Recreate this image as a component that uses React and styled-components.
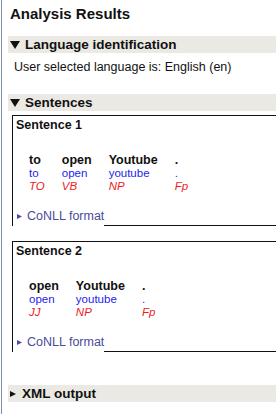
import React from 'react';
import styled, { createGlobalStyle } from 'styled-components';

const GlobalStyle = createGlobalStyle`
    html, body {
        margin: 0;
        padding: 0;
        background: #fff;
    }
    body {
        font-family: "Liberation Sans", Arial, sans-serif;
        color: #111;
    }
`;

const barGrey = '#ebe9e3';
const linkBlue = '#4b4b9b';

const Page = styled.div`
    width: 276px;
    height: 414px;
    overflow: hidden;
    background: #fff;
`;

const Panel = styled.div`
    width: 420px;
    min-height: 414px;
    margin-left: 1px;
    border-left: 1px solid #8090a8;
    padding-left: 6px;
    padding-top: 5px;
    box-sizing: border-box;
`;

const Title = styled.h2`
    margin: 0;
    padding-left: 2px;
    font-size: 15px;
    line-height: 18px;
    font-weight: bold;
`;

const SectionBar = styled.div`
    display: flex;
    align-items: center;
    height: 17px;
    margin-top: ${({ $gap }) => $gap}px;
    padding-left: 2px;
    background: ${barGrey};
    font-size: 13.5px;
    line-height: 17px;
    font-weight: bold;
`;

const LangText = styled.div`
    margin-top: 6px;
    padding-left: 6px;
    font-size: 12.5px;
    line-height: 16px;
`;

const SentenceBox = styled.div`
    margin: ${({ $gap }) => $gap}px 0 0 4px;
    border-top: 1px solid #111;
    border-left: 1px solid #111;
`;

const SentenceTitle = styled.div`
    padding: 2px 0 0 3px;
    font-size: 12.5px;
    line-height: 15px;
    font-weight: bold;
`;

const TokenRow = styled.div`
    display: flex;
    gap: 17px;
    margin: 20px 0 0 16px;
`;

const Token = styled.div`
    display: flex;
    flex-direction: column;
`;

const Word = styled.span`
    font-size: 12.5px;
    line-height: 14px;
    font-weight: bold;
    color: #111;
`;

const Lemma = styled.span`
    font-size: 11.5px;
    line-height: 13px;
    color: #1c1cf0;
`;

const Tag = styled.span`
    font-size: 11.5px;
    line-height: 12px;
    font-style: italic;
    color: #f01c1c;
`;

const BoxFooter = styled.div`
    display: flex;
    margin-top: 17px;
`;

const FormatLink = styled.a`
    display: flex;
    align-items: center;
    padding: 0 0 2px 4px;
    font-size: 12.5px;
    line-height: 15px;
    color: ${linkBlue};
    text-decoration: none;
    cursor: pointer;
`;

const Filler = styled.div`
    flex: 1;
    border-bottom: 1px solid #111;
`;

const Marker = styled.svg`
    flex: none;
    margin-right: ${({ $space }) => $space}px;
`;

const DownArrow = () => (
    <Marker $space={5} width="10" height="8" viewBox="0 0 10 8">
        <polygon points="0,0 10,0 5,8" fill="#111" />
    </Marker>
);

const RightArrow = ({ color = '#111', size = 6, space = 6 }) => (
    <Marker $space={space} width={size} height={size} viewBox="0 0 6 6">
        <polygon points="0,0 6,3 0,6" fill={color} />
    </Marker>
);

const sentences = [
    {
        title: 'Sentence 1',
        tokens: [
            { word: 'to', lemma: 'to', tag: 'TO' },
            { word: 'open', lemma: 'open', tag: 'VB' },
            { word: 'Youtube', lemma: 'youtube', tag: 'NP' },
            { word: '.', lemma: '.', tag: 'Fp' },
        ],
    },
    {
        title: 'Sentence 2',
        tokens: [
            { word: 'open', lemma: 'open', tag: 'JJ' },
            { word: 'Youtube', lemma: 'youtube', tag: 'NP' },
            { word: '.', lemma: '.', tag: 'Fp' },
        ],
    },
];

const Sentence = ({ sentence, gap }) => (
    <SentenceBox $gap={gap}>
        <SentenceTitle>{sentence.title}</SentenceTitle>
        <TokenRow>
            {sentence.tokens.map((t, i) => (
                <Token key={i}>
                    <Word>{t.word}</Word>
                    <Lemma>{t.lemma}</Lemma>
                    <Tag>{t.tag}</Tag>
                </Token>
            ))}
        </TokenRow>
        <BoxFooter>
            <FormatLink>
                <RightArrow color={linkBlue} size={5} space={5} />
                CoNLL format
            </FormatLink>
            <Filler />
        </BoxFooter>
    </SentenceBox>
);

export default function App() {
    return <>
        <GlobalStyle />
        <Page>
            <Panel>
                <Title>Analysis Results</Title>
                <SectionBar $gap={13}>
                    <DownArrow />
                    Language identification
                </SectionBar>
                <LangText>User selected language is: English (en)</LangText>
                <SectionBar $gap={19}>
                    <DownArrow />
                    Sentences
                </SectionBar>
                {sentences.map((s, i) => (
                    <Sentence key={i} sentence={s} gap={i === 0 ? 4 : 15} />
                ))}
                <SectionBar $gap={33}>
                    <RightArrow />
                    XML output
                </SectionBar>
            </Panel>
        </Page>
    </>;
}
